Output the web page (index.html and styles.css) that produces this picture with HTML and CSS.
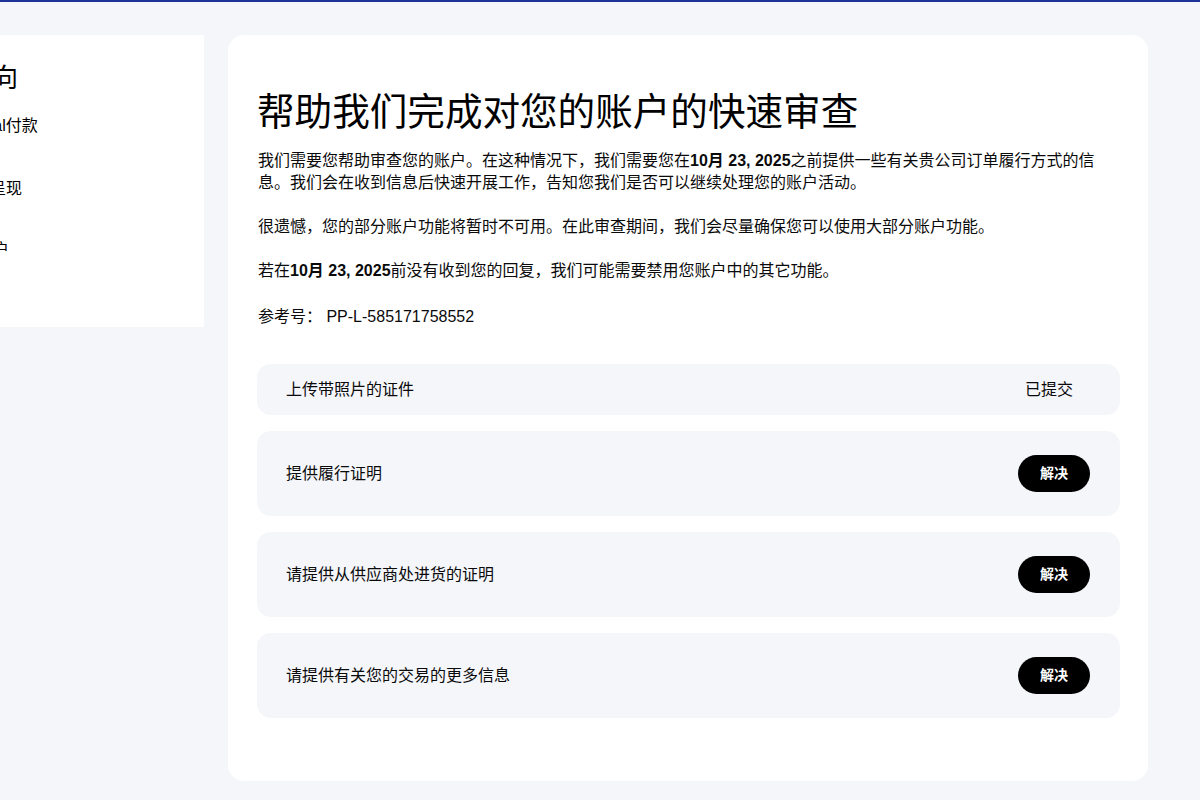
FILE: index.html
```html
<!DOCTYPE html>
<html lang="zh-CN">
<head>
<meta charset="utf-8">
<title>账户审查</title>
<link rel="stylesheet" href="styles.css">
</head>
<body>
<div class="topline"></div>
<div class="layout">
  <aside class="sidebar">
    <h2 class="side-title">快速导向</h2>
    <ul class="side-list">
      <li class="side-item side-item-1">接收PayPal付款</li>
      <li class="side-item side-item-2">账户余额呈现</li>
      <li class="side-item side-item-3">管理您账户</li>
    </ul>
  </aside>
  <main class="card">
    <h1 class="title">帮助我们完成对您的账户的快速审查</h1>
    <p class="para">我们需要您帮助审查您的账户。在这种情况下，我们需要您在<b>10月 23, 2025</b>之前提供一些有关贵公司订单履行方式的信息。我们会在收到信息后快速开展工作，告知您我们是否可以继续处理您的账户活动。</p>
    <p class="para">很遗憾，您的部分账户功能将暂时不可用。在此审查期间，我们会尽量确保您可以使用大部分账户功能。</p>
    <p class="para">若在<b>10月 23, 2025</b>前没有收到您的回复，我们可能需要禁用您账户中的其它功能。</p>
    <p class="para ref">参考号： PP-L-585171758552</p>
    <div class="tasks">
      <div class="task task-done">
        <span class="task-label">上传带照片的证件</span>
        <span class="task-status">已提交</span>
      </div>
      <div class="task">
        <span class="task-label">提供履行证明</span>
        <button class="btn">解决</button>
      </div>
      <div class="task">
        <span class="task-label">请提供从供应商处进货的证明</span>
        <button class="btn">解决</button>
      </div>
      <div class="task">
        <span class="task-label">请提供有关您的交易的更多信息</span>
        <button class="btn">解决</button>
      </div>
    </div>
  </main>
</div>
</body>
</html>
```

FILE: styles.css
```css
* { box-sizing: border-box; }

html, body {
  margin: 0;
  padding: 0;
  background: #f5f6fa;
  overflow: hidden;
}

body {
  font-family: "Liberation Sans", "Noto Sans CJK SC", sans-serif;
  color: #000000;
  width: 1200px;
  height: 800px;
}

.topline {
  height: 2px;
  background: #1e3396;
}

.layout {
  display: flex;
  align-items: flex-start;
  gap: 24px;
  padding-top: 33px;
}

.sidebar {
  width: 300px;
  margin-left: -96px;
  padding: 27px 0 66px 22px;
  background: #ffffff;
  flex: none;
}

.side-title {
  margin: 0 0 21px -12px;
  font-size: 26px;
  line-height: 32px;
  font-weight: 400;
  white-space: nowrap;
}

.side-list {
  list-style: none;
  margin: 0;
  padding: 0;
  font-size: 16px;
  line-height: 22px;
  white-space: nowrap;
}

.side-item-1 { margin-left: -3px; }
.side-item-2 { margin-top: 41px; }
.side-item-3 { margin-top: 39px; margin-left: 3px; }

.card {
  width: 920px;
  background: #ffffff;
  border-radius: 16px;
  padding: 55px 28px 63px 29px;
  flex: none;
}

.title {
  margin: 0 0 16px 0;
  font-size: 37.6px;
  line-height: 44px;
  font-weight: 400;
  color: #000;
}

.para {
  margin: 0 0 22px 1px;
  font-size: 16px;
  line-height: 22px;
  color: #0a0a0a;
}

.para b { font-weight: 700; }

.para:nth-of-type(3) { margin-bottom: 24px; }

.para.ref { margin-bottom: 36px; }

.tasks {
  display: flex;
  flex-direction: column;
  gap: 16px;
}

.task {
  display: flex;
  align-items: center;
  justify-content: space-between;
  background: #f5f6fa;
  border-radius: 14px;
  padding: 0 30px 0 29px;
  height: 85px;
  font-size: 16px;
  line-height: 22px;
  color: #0a0a0a;
}

.task.task-done {
  height: 51px;
}

.task-status {
  margin-right: 17px;
}

.btn {
  border: none;
  background: #000;
  color: #fff;
  font-family: "Liberation Sans", "Noto Sans CJK SC", sans-serif;
  font-size: 14px;
  font-weight: 700;
  line-height: 1;
  width: 72px;
  height: 37px;
  border-radius: 19px;
  padding: 0 0 2px;
  cursor: pointer;
}
```
